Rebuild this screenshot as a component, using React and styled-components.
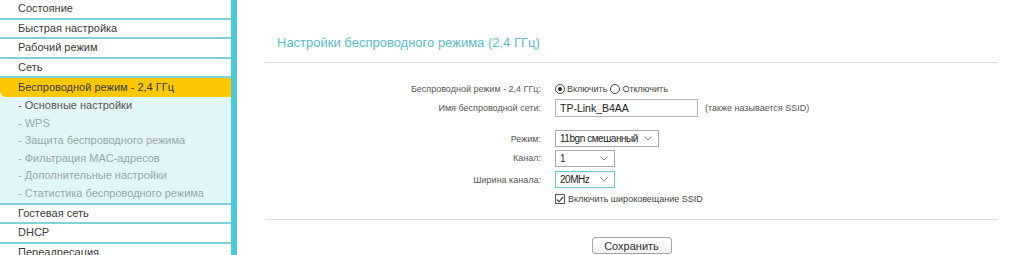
import styled, { createGlobalStyle } from 'styled-components';

const GlobalStyle = createGlobalStyle`
  body {
    margin: 0;
    background: #fff;
    font-family: "Liberation Sans", Arial, sans-serif;
    color: #333;
  }
`;

const menuTop = ['Состояние', 'Быстрая настройка', 'Рабочий режим', 'Сеть'];
const subItems = [
  { label: '- Основные настройки', active: true },
  { label: '- WPS' },
  { label: '- Защита беспроводного режима' },
  { label: '- Фильтрация MAC-адресов' },
  { label: '- Дополнительные настройки' },
  { label: '- Статистика беспроводного режима' },
];
const menuBottom = ['Гостевая сеть', 'DHCP', 'Переадресация'];

const Chevron = () => (
  <svg width="8" height="5" viewBox="0 0 8 5">
    <path d="M0.5 0.5 L4 4 L7.5 0.5" fill="none" stroke="#888" strokeWidth="1" />
  </svg>
);

const App = () => {
  return (
    <>
      <GlobalStyle />
      <Page>
        <Sidebar>
          {menuTop.map((item) => (
            <MenuItem key={item}>{item}</MenuItem>
          ))}
          <ActiveItem>Беспроводной режим - 2,4 ГГц</ActiveItem>
          <SubMenu>
            {subItems.map((s) => (
              <SubItem key={s.label} $active={s.active}>{s.label}</SubItem>
            ))}
          </SubMenu>
          {menuBottom.map((item) => (
            <MenuItem key={item} $first={item === 'Гостевая сеть'}>{item}</MenuItem>
          ))}
        </Sidebar>

        <Main>
          <Title>Настройки беспроводного режима (2,4 ГГц)</Title>
          <Divider />

          <Form>
            <Row $h={18}>
              <Label>Беспроводной режим - 2,4 ГГц:</Label>
              <Field>
                <Radio $checked />
                <OptionText>Включить</OptionText>
                <Radio />
                <OptionText>Отключить</OptionText>
              </Field>
            </Row>
            <Row $h={20}>
              <Label>Имя беспроводной сети:</Label>
              <Field>
                <TextInput>TP-Link_B4AA</TextInput>
                <Hint>(также называется SSID)</Hint>
              </Field>
            </Row>
            <Row $h={19} $top={11}>
              <Label>Режим:</Label>
              <Field>
                <Select $w={104}>
                  <span>11bgn смешанный</span>
                  <Chevron />
                </Select>
              </Field>
            </Row>
            <Row $h={20}>
              <Label>Канал:</Label>
              <Field>
                <Select $w={60}>
                  <span>1</span>
                  <Chevron />
                </Select>
              </Field>
            </Row>
            <Row $h={21} $top={1}>
              <Label>Ширина канала:</Label>
              <Field>
                <Select $w={60} $focused>
                  <span>20MHz</span>
                  <Chevron />
                </Select>
              </Field>
            </Row>
            <Row $h={18}>
              <Label />
              <Field>
                <Checkbox>
                  <svg width="8" height="7" viewBox="0 0 8 7">
                    <path d="M0.8 3.5 L3 5.8 L7.2 0.8" fill="none" stroke="#333" strokeWidth="1.1" />
                  </svg>
                </Checkbox>
                <OptionText>Включить широковещание SSID</OptionText>
              </Field>
            </Row>
          </Form>

          <Divider $top={11} />
          <Actions>
            <SaveButton>Сохранить</SaveButton>
          </Actions>
        </Main>
      </Page>
    </>
  );
};

const Page = styled.div`
  display: flex;
  width: 1024px;
  height: 255px;
  overflow: hidden;
`;

const Sidebar = styled.nav`
  width: 231px;
  flex-shrink: 0;
  border-right: 6px solid #4fc8d4;
  display: flex;
  flex-direction: column;
  font-size: 11px;
`;

const MenuItem = styled.div`
  height: 17.5px;
  line-height: 17.5px;
  padding-left: 18px;
  color: #3a3a3a;
  border-bottom: 2px solid #7fd2dc;
  border-top: ${(p) => (p.$first ? '2px solid #7fd2dc' : 'none')};
  flex-shrink: 0;
`;

const ActiveItem = styled.div`
  height: 19px;
  line-height: 19px;
  padding-left: 18px;
  background: #fdc700;
  color: #3a3a3a;
  border-bottom-left-radius: 6px;
  flex-shrink: 0;
`;

const SubMenu = styled.div`
  background: #e1f6f8;
  display: flex;
  flex-direction: column;
  flex-shrink: 0;
`;

const SubItem = styled.div`
  height: 17.6px;
  line-height: 17.6px;
  padding-left: 18px;
  color: ${(p) => (p.$active ? '#555' : '#9aa6aa')};
`;

const Main = styled.main`
  flex: 1;
  padding: 0 26px 0 28px;
  display: flex;
  flex-direction: column;
`;

const Title = styled.h1`
  margin: 35px 0 0 12px;
  height: 27px;
  font-size: 13px;
  font-weight: normal;
  color: #5bbccb;
  line-height: 16px;
`;

const Divider = styled.hr`
  margin: ${(p) => p.$top || 0}px 0 0;
  border: 0;
  border-top: 1px solid #dcdcdc;
  height: 0;
`;

const Form = styled.div`
  display: flex;
  flex-direction: column;
  padding-top: 17px;
`;

const Row = styled.div`
  display: flex;
  align-items: center;
  height: ${(p) => p.$h}px;
  margin-top: ${(p) => p.$top || 0}px;
`;

const Label = styled.div`
  width: 290px;
  padding-right: 14px;
  text-align: right;
  font-size: 9px;
  color: #555;
  flex-shrink: 0;
  box-sizing: border-box;
`;

const Field = styled.div`
  display: flex;
  align-items: center;
  gap: 2px;
  white-space: nowrap;
`;

const Radio = styled.span`
  width: 10px;
  height: 10px;
  border: 1px solid #444;
  border-radius: 50%;
  box-sizing: border-box;
  display: inline-flex;
  align-items: center;
  justify-content: center;
  &::after {
    content: '';
    width: 4px;
    height: 4px;
    border-radius: 50%;
    background: ${(p) => (p.$checked ? '#222' : 'transparent')};
  }
`;

const OptionText = styled.span`
  font-size: 9px;
  color: #444;
  margin-right: 1px;
`;

const TextInput = styled.div`
  width: 143px;
  height: 18px;
  box-sizing: border-box;
  border: 1px solid #b5b5b5;
  padding-left: 4px;
  font-size: 10.5px;
  line-height: 16px;
  color: #222;
`;

const Hint = styled.span`
  margin-left: 5px;
  font-size: 9px;
  color: #555;
`;

const Select = styled.div`
  width: ${(p) => p.$w}px;
  height: 17px;
  box-sizing: border-box;
  border: 1px solid ${(p) => (p.$focused ? '#6cc5cf' : '#a9a9a9')};
  padding: 0 6px 0 4px;
  display: flex;
  align-items: center;
  justify-content: space-between;
  font-size: 10px;
  letter-spacing: -0.45px;
  color: #222;
  flex-shrink: 0;
`;

const Checkbox = styled.span`
  width: 10px;
  height: 10px;
  border: 1px solid #555;
  box-sizing: border-box;
  display: inline-flex;
  align-items: center;
  justify-content: center;
  margin-right: 1px;
`;

const Actions = styled.div`
  display: flex;
  justify-content: center;
  padding-top: 17px;
`;

const SaveButton = styled.button`
  width: 80px;
  height: 17px;
  padding: 0;
  border: 1px solid #a5a5a5;
  border-radius: 3px;
  background: linear-gradient(#fff, #f0f0f0);
  font-family: "Liberation Sans", Arial, sans-serif;
  font-size: 11px;
  color: #333;
`;

export default App;
